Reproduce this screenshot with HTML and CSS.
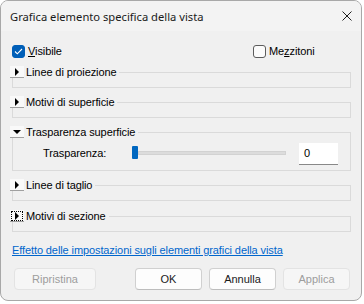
FILE: index.html
```html
<!DOCTYPE html>
<html lang="it">
<head>
  <meta charset="utf-8">
  <title>Grafica elemento specifica della vista</title>
  <link rel="stylesheet" href="styles.css">
</head>
<body>
  <div class="dialog">
    <div class="titlebar">
      <span class="title">Grafica elemento specifica della vista</span>
      <svg class="close" width="10" height="10" viewBox="0 0 10 10">
        <path d="M0.5 0.5 L9.5 9.5 M9.5 0.5 L0.5 9.5" stroke="#1f1f1f" stroke-width="1" fill="none"/>
      </svg>
    </div>

    <div class="content">
      <div class="check-row">
        <label class="check">
          <span class="box checked">
            <svg width="9" height="7" viewBox="0 0 9 7"><path d="M1 3.5 L3.3 5.8 L8 1" stroke="#fff" stroke-width="1.1" fill="none"/></svg>
          </span>
          <span><u>V</u>isibile</span>
        </label>
        <label class="check">
          <span class="box"></span>
          <span>Me<u>z</u>zitoni</span>
        </label>
      </div>

      <div class="group">
        <div class="group-head"><span class="toggle"><span class="arrow-right"></span></span>Linee di proiezione</div>
      </div>

      <div class="group">
        <div class="group-head"><span class="toggle"><span class="arrow-right"></span></span>Motivi di superficie</div>
      </div>

      <div class="group open">
        <div class="group-head"><span class="toggle"><span class="arrow-down"></span></span>Trasparenza superficie</div>
        <div class="slider-row">
          <span class="slider-label">Trasparenza:</span>
          <div class="slider">
            <span class="thumb"></span>
            <span class="track"></span>
          </div>
          <div class="num-box">0</div>
        </div>
      </div>

      <div class="group">
        <div class="group-head"><span class="toggle"><span class="arrow-right"></span></span>Linee di taglio</div>
      </div>

      <div class="group last">
        <div class="group-head"><span class="toggle focused"><span class="arrow-right"></span></span>Motivi di sezione</div>
      </div>

      <a class="help-link" href="#">Effetto delle impostazioni sugli elementi grafici della vista</a>

      <div class="buttons">
        <button class="btn wide" disabled>Ripristina</button>
        <button class="btn">OK</button>
        <button class="btn">Annulla</button>
        <button class="btn" disabled>Applica</button>
      </div>
    </div>
  </div>
</body>
</html>
```

FILE: styles.css
```css
body {
  margin: 0;
  background: #fff;
  font-family: "Liberation Sans", Arial, sans-serif;
  font-size: 11px;
  letter-spacing: -0.1px;
  color: #000;
}
.dialog {
  width: 362px;
  height: 301px;
  box-sizing: border-box;
  border: 1px solid #a8a8a8;
  border-radius: 8px;
  background: #f0f0f0;
  overflow: hidden;
}
.titlebar {
  height: 30px;
  display: flex;
  align-items: center;
  justify-content: space-between;
  padding: 0 9px 0 9px;
  background: #f3f3f3;
  color: #1a1a1a;
}
.title {
  font-family: "Noto Sans", sans-serif;
  font-size: 11.2px;
  letter-spacing: 0;
}
.content {
  padding: 0 10px 0 11px;
}
.check-row {
  display: grid;
  grid-template-columns: 241px auto;
  margin-top: 14px;
  height: 13px;
}
.check {
  display: flex;
  align-items: center;
  gap: 3px;
  line-height: 13px;
}
.box {
  width: 11px;
  height: 11px;
  border: 1px solid #5c5c5c;
  border-radius: 3px;
  background: #fbfbfb;
  display: flex;
  align-items: center;
  justify-content: center;
}
.box.checked {
  background: #005fb8;
  border-color: #005fb8;
}
.group {
  margin-top: 14px;
  border: 1px solid #dadada;
  padding-bottom: 9px;
}
.group:first-of-type {
  margin-top: 15px;
}
.group.open {
  padding-bottom: 5px;
}
.group.last {
  margin-top: 15px;
}
.group-head {
  display: flex;
  align-items: center;
  gap: 2px;
  width: max-content;
  height: 12px;
  margin: -7px 0 0 -3px;
  padding-right: 3px;
  background: #f0f0f0;
  line-height: 12px;
}
.toggle {
  width: 13px;
  height: 11px;
  background: #f9f9f9;
  border-bottom: 1px solid #a0a0a0;
  display: flex;
  align-items: center;
  justify-content: center;
  box-sizing: content-box;
  padding-right: 1px;
}
.toggle.focused {
  outline: 1px dotted #000;
  outline-offset: -2px;
}
.arrow-right {
  width: 0;
  height: 0;
  border-top: 4px solid transparent;
  border-bottom: 4px solid transparent;
  border-left: 4px solid #000;
}
.arrow-down {
  width: 0;
  height: 0;
  border-left: 4px solid transparent;
  border-right: 4px solid transparent;
  border-top: 4px solid #000;
}
.slider-row {
  display: flex;
  align-items: center;
  margin: 5px 0 0 30px;
  height: 22px;
}
.slider-label {
  width: 89px;
  margin-top: -3px;
}
.slider {
  width: 154px;
  display: flex;
  align-items: center;
  margin-top: -3px;
}
.thumb {
  width: 6px;
  height: 13px;
  background: #0067c0;
  border-radius: 1px;
}
.track {
  flex: 1;
  height: 2px;
  background: #dcdcdc;
  border: 1px solid #d2d2d2;
}
.num-box {
  width: 34px;
  height: 21px;
  margin-left: 13px;
  padding-left: 5px;
  background: #fff;
  border-bottom: 1px solid #888;
  line-height: 21px;
}
.help-link {
  display: block;
  margin-top: 11px;
  color: #0066cc;
  line-height: 14px;
  width: max-content;
}
.buttons {
  display: flex;
  gap: 7px;
  margin-top: 11px;
  padding: 0 1px 0 2px;
}
.btn {
  width: 67px;
  height: 22px;
  font-family: "Liberation Sans", Arial, sans-serif;
  font-size: 11px;
  background: #fdfdfd;
  color: #1a1a1a;
  border: 1px solid #d0d0d0;
  border-bottom-color: #bdbdbd;
  border-radius: 4px;
  padding: 0;
}
.btn.wide {
  width: 82px;
  margin-right: auto;
}
.btn:disabled {
  background: #f6f6f6;
  color: #9d9d9d;
  border-color: #e3e3e3;
}
```
